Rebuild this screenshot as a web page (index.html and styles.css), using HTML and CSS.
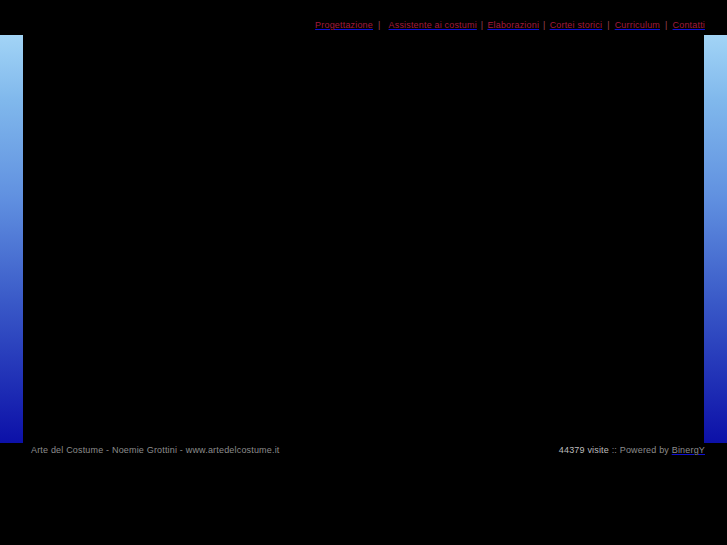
FILE: index.html
```html
<!DOCTYPE html>
<html>
<head>
<meta charset="utf-8">
<title>Arte del Costume</title>
<link rel="stylesheet" href="styles.css">
</head>
<body>
<div class="page">
  <div class="topbar">
    <nav class="nav">
      <a href="#">Progettazione</a><span class="sep s1">|</span><a href="#">Assistente ai costumi</a><span class="sep">|</span><a href="#">Elaborazioni</a><span class="sep">|</span><a href="#">Cortei storici</a><span class="sep s2">|</span><a href="#">Curriculum</a><span class="sep s2">|</span><a href="#">Contatti</a>
    </nav>
  </div>
  <div class="main">
    <div class="side"></div>
    <div class="content"></div>
    <div class="side"></div>
  </div>
  <div class="footer">
    <div class="credit">Arte del Costume - Noemie Grottini - www.artedelcostume.it</div>
    <div class="stats"><span class="count">44379 visite</span> :: Powered by <a href="#">BinergY</a></div>
  </div>
</div>
</body>
</html>
```
FILE: styles.css
```css
html, body {
  margin: 0;
  padding: 0;
  background: #000;
}
.page {
  width: 727px;
  font-family: "Liberation Sans", Arial, sans-serif;
  font-size: 9px;
  letter-spacing: 0.18px;
}
.topbar {
  height: 35px;
  display: flex;
  justify-content: flex-end;
  align-items: flex-start;
  padding-right: 22px;
  box-sizing: border-box;
}
.nav {
  margin-top: 20px;
  line-height: 11px;
  display: flex;
  align-items: baseline;
}
.nav a {
  color: #a41a3c;
  text-decoration: underline;
  text-decoration-color: #1010d0;
}
.sep {
  color: #9a4050;
  margin: 0 4px;
}
.sep.s1 { margin: 0 8px 0 5px; }
.sep.s2 { margin: 0 5px; }
.main {
  display: flex;
  height: 408px;
}
.side {
  width: 23px;
  background: linear-gradient(to bottom, #a2d4f6 0%, #80b8ec 16%, #6090e0 40%, #3a5ac8 65%, #0c10a8 100%);
}
.content {
  flex: 1;
  background: #000;
}
.footer {
  display: flex;
  justify-content: space-between;
  padding: 2px 22px 0 31px;
  color: #8c8c8c;
  line-height: 11px;
}
.count {
  color: #bcbcbc;
}
.stats a {
  color: #8c8c8c;
  text-decoration: underline;
  text-decoration-color: #1010d0;
}
```
